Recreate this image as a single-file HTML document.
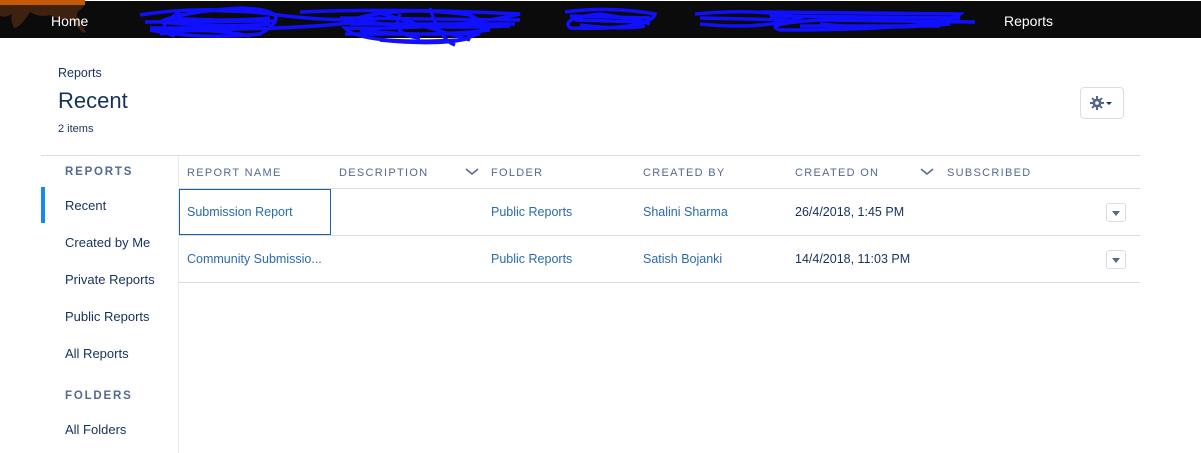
<!DOCTYPE html>
<html><head><meta charset="utf-8"><style>
*{margin:0;padding:0;box-sizing:border-box}
body{width:1201px;height:453px;background:#fff;font-family:"Liberation Sans",sans-serif;color:#16325c;position:relative;overflow:hidden}
.nav{position:absolute;left:0;top:1px;width:1201px;height:37px;background:#0b0b0b}
.nav .t{position:absolute;top:12px;color:#fff;font-size:14px}
.abs{position:absolute}
.crumb{left:58px;top:66px;font-size:12.5px;color:#16325c}
.title{left:58px;top:88px;font-size:22px;color:#16325c}
.items{left:58px;top:123px;font-size:11px;color:#16325c}
.gear{left:1080px;top:87px;width:44px;height:32px;border:1px solid #d8dde6;border-radius:4px}
.hline{position:absolute;height:1px;background:#d8dde6}
.side{position:absolute;left:65px;font-size:13px;color:#16325c}
.sh{position:absolute;left:65px;font-size:11.5px;letter-spacing:1.8px;color:#54698d;font-weight:bold}
.th{position:absolute;top:167px;font-size:11px;letter-spacing:1.3px;color:#54698d}
.td{position:absolute;font-size:12.5px;color:#2a6bb0}
.tdk{position:absolute;font-size:12.5px;color:#16325c}
.dd{position:absolute;left:1106px;width:20px;height:19px;border:1px solid #d8dde6;border-radius:3px}
.dd:after{content:"";position:absolute;left:5px;top:7px;border-left:4px solid transparent;border-right:4px solid transparent;border-top:5px solid #54698d}
</style></head><body>
<div class="nav">
<svg class="abs" style="left:0;top:-1px" width="90" height="40"><rect x="0" y="0" width="85" height="5" fill="#c35a08"/><path d="M0 5 H85 L80 10 Q72 15 85 30 Q88 34 82 32 L70 18 Q62 22 50 15 Q40 18 30 12 Q20 28 14 28 Q10 20 12 14 Q5 18 0 16Z" fill="#3f2110"/></svg>
<span class="t" style="left:51px">Home</span>
<span class="t" style="left:1004px">Reports</span>
<svg class="abs" style="left:0;top:-1px;overflow:visible" width="1201" height="50" fill="none" stroke="#1010ff" stroke-width="3.5">
<path d="M140 15 Q200 5 270 14 T380 18 Q330 30 150 30 Q200 40 260 34 Q300 10 240 8 Q180 12 160 22 Q220 28 270 24"/>
<path d="M200 10 L255 12 M170 18 Q230 22 270 18 M150 28 L260 28 M145 22 L275 21 M160 34 Q200 26 250 36 M180 12 Q150 30 175 36"/>
<path d="M300 12 Q400 8 520 14 Q450 30 345 28 Q360 45 460 40 Q500 30 470 15 Q400 5 350 20 Q420 30 510 26"/>
<path d="M340 18 L520 20 M345 34 L480 34 M370 10 L470 40 M430 8 Q440 40 455 45 M350 24 L515 24 M360 30 Q420 38 490 30 M380 40 Q440 46 470 38 M400 14 Q390 35 420 38"/>
<path d="M565 12 Q610 6 655 14 Q650 30 570 28 Q560 18 600 14 Q640 20 650 24 M575 20 L645 22 M570 16 L650 18 M580 25 Q620 30 645 26"/>
<path d="M695 14 Q760 8 800 18 Q760 30 700 24 M760 12 L960 14 Q940 30 780 30 Q760 24 820 20 L975 22 M800 26 L940 26 M700 18 L790 20 M770 16 L960 18 M820 24 Q880 30 950 24"/>
</svg>
</div>
<div class="abs crumb">Reports</div>
<div class="abs title">Recent</div>
<div class="abs items">2 items</div>
<div class="abs gear"><svg class="abs" style="left:9px;top:8px" width="24" height="14"><g fill="#54698d"><circle cx="7" cy="7" r="4.5"/><rect x="6" y="0" width="2" height="14"/><rect x="0" y="6" width="14" height="2"/><rect x="6" y="0" width="2" height="14" transform="rotate(45 7 7)"/><rect x="6" y="0" width="2" height="14" transform="rotate(-45 7 7)"/></g><circle cx="7" cy="7" r="1.8" fill="#fff"/><path d="M16 6 h6 l-3 3z" fill="#16325c"/></svg></div>
<div class="hline" style="left:41px;top:155px;width:1099px"></div>
<div class="abs" style="left:178px;top:156px;width:1px;height:297px;background:#e8ebf0"></div>
<div class="sh" style="top:166px">REPORTS</div>
<div class="abs" style="left:41px;top:187px;width:4px;height:36px;background:#1589ee"></div>
<div class="side" style="top:198px">Recent</div>
<div class="side" style="top:235px">Created by Me</div>
<div class="side" style="top:272px">Private Reports</div>
<div class="side" style="top:309px">Public Reports</div>
<div class="side" style="top:346px">All Reports</div>
<div class="sh" style="top:390px">FOLDERS</div>
<div class="side" style="top:422px">All Folders</div>
<div class="th" style="left:187px">REPORT NAME</div>
<div class="th" style="left:339px">DESCRIPTION</div>
<div class="th" style="left:491px">FOLDER</div>
<div class="th" style="left:643px">CREATED BY</div>
<div class="th" style="left:795px">CREATED ON</div>
<div class="th" style="left:947px">SUBSCRIBED</div>
<svg class="abs" style="left:465px;top:168px" width="14" height="8"><path d="M1 1 L7 6 L13 1" stroke="#54698d" stroke-width="1.5" fill="none"/></svg>
<svg class="abs" style="left:920px;top:168px" width="14" height="8"><path d="M1 1 L7 6 L13 1" stroke="#54698d" stroke-width="1.5" fill="none"/></svg>
<div class="hline" style="left:179px;top:188px;width:961px"></div>
<div class="hline" style="left:179px;top:235px;width:961px"></div>
<div class="hline" style="left:179px;top:282px;width:961px"></div>
<div class="abs" style="left:179px;top:189px;width:152px;height:46px;border:1px solid #1b5fa8"></div>
<div class="td" style="left:187px;top:205px">Submission Report</div>
<div class="td" style="left:491px;top:205px">Public Reports</div>
<div class="td" style="left:643px;top:205px">Shalini Sharma</div>
<div class="tdk" style="left:795px;top:205px">26/4/2018, 1:45 PM</div>
<div class="dd" style="top:203px"></div>
<div class="td" style="left:187px;top:252px">Community Submissio...</div>
<div class="td" style="left:491px;top:252px">Public Reports</div>
<div class="td" style="left:643px;top:252px">Satish Bojanki</div>
<div class="tdk" style="left:795px;top:252px">14/4/2018, 11:03 PM</div>
<div class="dd" style="top:250px"></div>
</body></html>
